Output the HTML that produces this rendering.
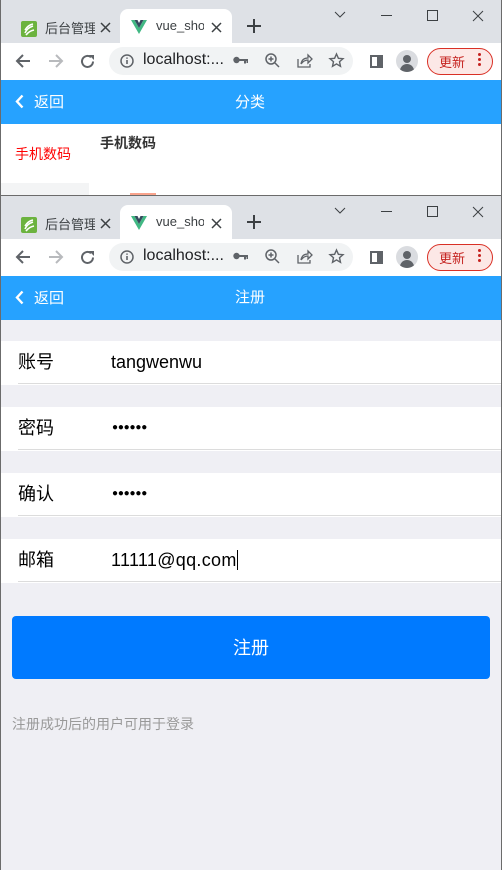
<!DOCTYPE html>
<html><head><meta charset="utf-8"><style>
*{margin:0;padding:0;box-sizing:border-box}
body{width:502px;height:870px;position:relative;overflow:hidden;background:#efeff4;font-family:"Liberation Sans","Noto Sans CJK SC",sans-serif}
.a{position:absolute}
.win{position:absolute;left:0;width:502px}
.tabs{position:absolute;left:0;top:0;width:502px;height:43px;background:#dee1e6}
.tb{position:absolute;left:0;top:43px;width:502px;height:37px;background:#fff}
.nav{position:absolute;left:0;top:80px;width:502px;height:44px;background:#26a2ff;color:#fff;font-size:15px}
.t{font-size:13px;color:#3c4043;white-space:nowrap}
svg{position:absolute;overflow:visible}
</style></head><body>

<div class="win" style="top:0;height:195px;background:#fff">
 <div class="tabs"></div>
 <div class="tb"></div>
 <div class="nav"></div>
</div>
<div class="win" style="top:195px;height:675px;background:#efeff4;border-top:1px solid #6b6b6b">
 <div class="tabs"></div>
 <div class="tb"></div>
 <div class="nav"></div>
</div>

<div class="a" style="left:0;top:0;width:1px;height:870px;background:#6b6b6b"></div>
<div class="a" style="right:0;top:0;width:1px;height:870px;background:#6b6b6b"></div>

<div id="c1" class="a" style="left:0;top:0;width:502px;height:124px">
 <div class="a" style="left:120px;top:9px;width:112px;height:34px;background:#fff;border-radius:8px 8px 0 0"></div>
 <svg style="left:21px;top:21px" width="16" height="16"><rect width="16" height="16" rx="2" fill="#6cb33f"/><path d="M4 12 Q6 7 12 5 M4 9 Q7 4 12 3 M5 14 Q8 10 13 9" stroke="#fff" stroke-width="1.6" fill="none"/></svg>
 <div class="a t" style="left:45px;top:18px;width:50px;overflow:hidden">后台管理</div>
 <svg style="left:101px;top:23px" width="9" height="9"><path d="M0 0l9 9M9 0L0 9" stroke="#3c4043" stroke-width="1.5"/></svg>
 <svg style="left:131px;top:20px" width="16" height="14"><path d="M0 0h3.5L8 8 12.5 0H16L8 14z" fill="#41b883"/><path d="M3.5 0h3L8 3 9.5 0h3L8 8z" fill="#35495e"/></svg>
 <div class="a t" style="left:156px;top:18px;width:48px;overflow:hidden">vue_sho</div>
 <svg style="left:212px;top:23px" width="9" height="9"><path d="M0 0l9 9M9 0L0 9" stroke="#3c4043" stroke-width="1.5"/></svg>
 <svg style="left:247px;top:19px" width="14" height="14"><path d="M7 0v14M0 7h14" stroke="#3c4043" stroke-width="2"/></svg>
 <svg style="left:334px;top:11px" width="12" height="8"><path d="M1 1l5 5 5-5" stroke="#3c4043" fill="none"/></svg>
 <div class="a" style="left:381px;top:15px;width:11px;height:1px;background:#3c4043"></div>
 <div class="a" style="left:427px;top:10px;width:11px;height:11px;border:1px solid #3c4043"></div>
 <svg style="left:472px;top:10px" width="12" height="12"><path d="M1 1l10 10M11 1L1 11" stroke="#3c4043"/></svg>
 <svg style="left:15px;top:54px" width="16" height="14"><path d="M15 7H2M8 1L2 7l6 6" stroke="#5f6368" stroke-width="2" fill="none"/></svg>
 <svg style="left:48px;top:54px" width="16" height="14"><path d="M1 7h13M8 1l6 6-6 6" stroke="#b8babd" stroke-width="2" fill="none"/></svg>
 <svg style="left:80px;top:54px" width="15" height="15"><path d="M13 7.5A5.5 5.5 0 1 1 11 3.2" stroke="#5f6368" stroke-width="2" fill="none"/><path d="M9 1h5v5z" fill="#5f6368"/></svg>
 <div class="a" style="left:109px;top:47px;width:244px;height:28px;background:#f1f3f4;border-radius:14px"></div>
 <svg style="left:120px;top:54px" width="14" height="14"><circle cx="7" cy="7" r="6" stroke="#5f6368" stroke-width="1.5" fill="none"/><path d="M7 6v4M7 3.5v1.2" stroke="#5f6368" stroke-width="1.6"/></svg>
 <div class="a" style="left:143px;top:51px;font-size:16px;color:#202124">localhost:...</div>
 <svg style="left:233px;top:56px" width="15" height="8"><circle cx="3.5" cy="4" r="3.2" fill="#5f6368"/><path d="M6 3h9v2H6zM11 5h2v2.5h-2zM13.5 5h1.5v2h-1.5z" fill="#5f6368"/></svg>
 <svg style="left:265px;top:53px" width="15" height="15"><circle cx="6" cy="6" r="5" stroke="#5f6368" stroke-width="1.5" fill="none"/><path d="M10 10l4 4M3.5 6h5M6 3.5v5" stroke="#5f6368" stroke-width="1.5"/></svg>
 <svg style="left:297px;top:53px" width="15" height="15"><path d="M1 6v8h12v-3M4 11q1-6 7-6V2l4 4-4 4V7q-4 0-7 4" stroke="#5f6368" stroke-width="1.3" fill="none"/></svg>
 <svg style="left:329px;top:53px" width="15" height="15"><path d="M7.5 1l1.9 4.3 4.6.4-3.5 3 1 4.6-4-2.4-4 2.4 1-4.6-3.5-3 4.6-.4z" stroke="#5f6368" stroke-width="1.4" fill="none"/></svg>
 <div class="a" style="left:370px;top:55px;width:13px;height:13px;border:2px solid #5f6368;border-right-width:6px"></div>
 <div class="a" style="left:396px;top:50px;width:22px;height:22px;border-radius:50%;background:#dadce0;overflow:hidden"><div class="a" style="left:7px;top:5px;width:8px;height:8px;border-radius:50%;background:#5f6368"></div><div class="a" style="left:4px;top:14px;width:14px;height:10px;border-radius:7px 7px 0 0;background:#5f6368"></div></div>
 <div class="a" style="left:427px;top:48px;width:66px;height:27px;border:1px solid #d93025;border-radius:14px;background:#fce8e6"></div>
 <div class="a" style="left:439px;top:52px;font-size:13px;color:#c5221f">更新</div>
 <div class="a" style="left:478px;top:53px;width:3px;height:3px;border-radius:50%;background:#c5221f;box-shadow:0 5px 0 #c5221f,0 10px 0 #c5221f"></div>
 <svg style="left:15px;top:94px" width="9" height="15"><path d="M7.5 1.5L2 7.5l5.5 6" stroke="#fff" stroke-width="2.4" fill="none"/></svg>
 <div class="a" style="left:34px;top:91px;font-size:15px;color:#fff">返回</div>
</div>

<div class="a" style="left:235px;top:91px;font-size:15px;color:#fff">分类</div>
<div class="a" style="left:15px;top:144px;font-size:14px;color:#f00">手机数码</div>
<div class="a" style="left:100px;top:133px;font-size:14px;color:#333;font-weight:bold">手机数码</div>
<div class="a" style="left:1px;top:183px;width:88px;height:12px;background:#f3f4f5"></div>
<div class="a" style="left:130px;top:193px;width:26px;height:2px;background:#f9a38c"></div>

<div class="a" style="left:235px;top:286px;font-size:15px;color:#fff">注册</div>

<div id="c2"></div>

<div class="a" style="left:1px;top:341px;width:500px;height:44px;background:#fff"></div>
<div class="a" style="left:1px;top:407px;width:500px;height:44px;background:#fff"></div>
<div class="a" style="left:1px;top:473px;width:500px;height:44px;background:#fff"></div>
<div class="a" style="left:1px;top:539px;width:500px;height:44px;background:#fff"></div>
<div class="a" style="left:18px;top:383px;width:483px;height:1px;background:#dcdcdc"></div>
<div class="a" style="left:18px;top:449px;width:483px;height:1px;background:#dcdcdc"></div>
<div class="a" style="left:18px;top:515px;width:483px;height:1px;background:#dcdcdc"></div>
<div class="a" style="left:18px;top:581px;width:483px;height:1px;background:#dcdcdc"></div>
<div class="a" style="left:18px;top:348px;font-size:18px;color:#000">账号</div>
<div class="a" style="left:18px;top:414px;font-size:18px;color:#000">密码</div>
<div class="a" style="left:18px;top:480px;font-size:18px;color:#000">确认</div>
<div class="a" style="left:18px;top:546px;font-size:18px;color:#000">邮箱</div>
<div class="a" style="left:111px;top:352px;font-size:18px;color:#000">tangwenwu</div>
<div class="a" style="left:112px;top:422px;font-size:10px;color:#000;letter-spacing:-0.2px">●●●●●●</div>
<div class="a" style="left:112px;top:488px;font-size:10px;color:#000;letter-spacing:-0.2px">●●●●●●</div>
<div class="a" style="left:111px;top:550px;font-size:18px;color:#000;letter-spacing:0.3px">11111@qq.com</div>
<div class="a" style="left:237px;top:550px;width:1px;height:20px;background:#000"></div>

<div class="a" style="left:12px;top:616px;width:478px;height:63px;background:#007aff;border-radius:4px;color:#fff;font-size:18px;text-align:center;line-height:64px">注册</div>
<div class="a" style="left:12px;top:714px;font-size:14px;color:#999">注册成功后的用户可用于登录</div>

<script>
var c=document.getElementById('c1').cloneNode(true);c.id='c2x';c.style.top='196px';
document.body.insertBefore(c,document.getElementById('c2'));
</script>
</body></html>
